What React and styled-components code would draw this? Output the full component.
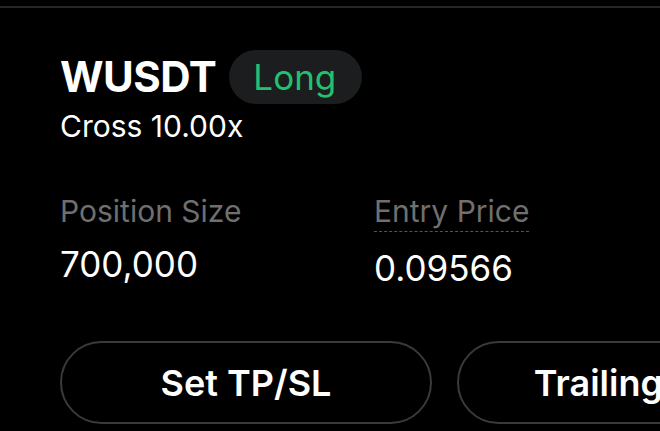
import styled, { createGlobalStyle } from "styled-components";

const GlobalStyle = createGlobalStyle`
  html, body {
    margin: 0;
    padding: 0;
    background: #000;
    overflow: hidden;
  }
  body {
    font-family: Inter, "Noto Sans", "Liberation Sans", sans-serif;
    color: #fff;
  }
`;

const Page = styled.div`
  width: 660px;
  height: 431px;
  overflow: hidden;
  background: #000;
`;

const TopRule = styled.div`
  height: 2px;
  margin-top: 6px;
  background: #262626;
`;

const Card = styled.div`
  padding: 42px 0 0 60px;
`;

const TitleRow = styled.div`
  display: flex;
  align-items: center;
  gap: 13px;
`;

const Symbol = styled.span`
  font-size: 42px;
  font-weight: 700;
  letter-spacing: -0.5px;
  line-height: 54px;
`;

const SideTag = styled.span`
  display: inline-flex;
  align-items: center;
  height: 54px;
  padding: 0 26px 0 24px;
  border-radius: 27px;
  background: #1b1d1f;
  color: ${(p) => (p.side === "long" ? "#22c16f" : "#f0475b")};
  font-size: 35px;
  font-weight: 400;
`;

const Leverage = styled.div`
  margin-top: 4px;
  font-size: 30px;
  line-height: 36px;
`;

const Stats = styled.div`
  display: grid;
  grid-template-columns: 314px 314px;
  margin-top: 50px;
`;

const Stat = styled.div`
  display: flex;
  flex-direction: column;
  align-items: flex-start;
`;

const Label = styled.span`
  font-size: 30px;
  line-height: 34px;
  color: #6f6f6f;
  border-bottom: ${(p) => (p.hint ? "1px dashed #555" : "none")};
  padding-bottom: ${(p) => (p.hint ? "3px" : "0")};
`;

const Value = styled.span`
  margin-top: 15px;
  font-size: 35px;
  line-height: 42px;
`;

const Actions = styled.div`
  display: grid;
  grid-template-columns: 372px 372px;
  gap: 25px;
  margin-top: 52px;
`;

const ActionButton = styled.button`
  height: 83px;
  border: 2px solid #3a3a3a;
  border-radius: 999px;
  background: transparent;
  color: #fff;
  font-family: inherit;
  font-size: 36px;
  font-weight: 600;
  white-space: nowrap;
  cursor: pointer;
`;

export default function App() {
  return (
    <Page>
      <GlobalStyle />
      <TopRule />
      <Card>
        <TitleRow>
          <Symbol>WUSDT</Symbol>
          <SideTag side="long">Long</SideTag>
        </TitleRow>
        <Leverage>Cross 10.00x</Leverage>

        <Stats>
          <Stat>
            <Label>Position Size</Label>
            <Value>700,000</Value>
          </Stat>
          <Stat>
            <Label hint>Entry Price</Label>
            <Value>0.09566</Value>
          </Stat>
        </Stats>

        <Actions>
          <ActionButton>Set TP/SL</ActionButton>
          <ActionButton>Trailing Stop</ActionButton>
        </Actions>
      </Card>
    </Page>
  );
}
